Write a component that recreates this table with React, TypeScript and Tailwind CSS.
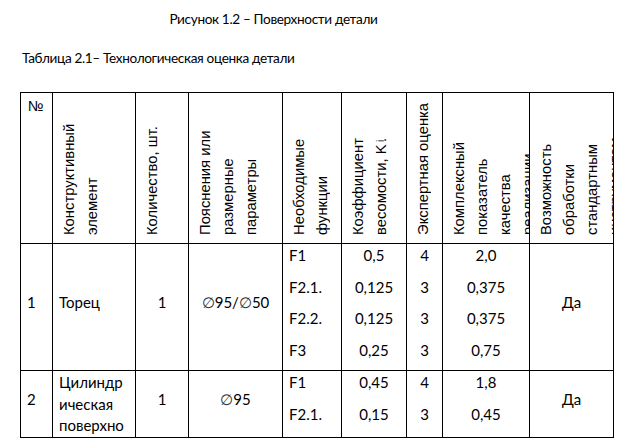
import React from "react";

const bodyFont = "font-[family-name:Lato,'Open_Sans',sans-serif]";
const headFont = "font-[family-name:'Liberation_Sans',Arial,sans-serif]";

const VHead = ({ lines }: { lines: React.ReactNode[] }) => {
    return (
        <div className="overflow-hidden bg-white">
            <div
                className={`${headFont} h-full w-full rotate-180 whitespace-nowrap pt-[8px] pr-[5px] text-[14.8px] leading-[23px] [writing-mode:vertical-rl]`}
            >
                {lines.map((line, i) => (
                    <div key={i}>{line}</div>
                ))}
            </div>
        </div>
    );
};

const Diam = () => (
    <span className="font-[family-name:'DejaVu_Sans',sans-serif] font-extralight text-[#333]">
        ∅
    </span>
);

// vertically centred cell (one line, with "space after" below it)
const Mid = ({
    children,
    center,
}: {
    children: React.ReactNode;
    center?: boolean;
}) => (
    <div
        className={`flex items-center overflow-hidden bg-white pb-[10px] leading-[20px] ${
            center ? "justify-center" : "pl-[6px]"
        }`}
    >
        <div>{children}</div>
    </div>
);

const Stack = ({
    items,
    center,
}: {
    items: string[];
    center?: boolean;
}) => (
    <div
        className={`overflow-hidden bg-white pt-[1px] leading-[20px] ${
            center ? "text-center" : "pl-[6px]"
        }`}
    >
        {items.map((it, i) => (
            <div key={i} className="h-[31.5px]">
                {it}
            </div>
        ))}
    </div>
);

export default function App() {
    return (
        <div className={`${bodyFont} h-[448px] w-[628px] bg-white text-[15px] text-black`}>
            <div className="ml-[22px] w-[503px] pt-[9px] text-center text-[13.6px] leading-[20px] tracking-[-0.35px]">
                Рисунок 1.2 – Поверхности детали
            </div>
            <div className="ml-[22px] mt-[19px] text-[13.6px] leading-[20px] tracking-[-0.35px]">
                Таблица 2.1– Технологическая оценка детали
            </div>

            <div className="ml-[20px] mt-[24px] grid w-[594px] grid-cols-[31px_82px_52px_93px_58px_64px_35px_86px_83px] grid-rows-[150px_126px_66px] gap-px bg-black p-px">
                {/* header */}
                <div className={`${headFont} bg-white pl-[7px] pt-[3px] text-[14.67px] leading-[20px]`}>
                    №
                </div>
                <VHead lines={["Конструктивный", "элемент"]} />
                <VHead lines={["Количество, шт."]} />
                <VHead lines={["Пояснения или", "размерные", "параметры"]} />
                <VHead lines={["Необходимые", "функции"]} />
                <VHead
                    lines={[
                        "Коэффициент",
                        <span key="k">
                            весомости, K<sub className="text-[10px]">i</sub>.
                        </span>,
                    ]}
                />
                <VHead lines={["Экспертная оценка"]} />
                <VHead lines={["Комплексный", "показатель", "качества", "реализации"]} />
                <VHead lines={["Возможность", "обработки", "стандартным", "инструментом"]} />

                {/* row 1 */}
                <Mid>1</Mid>
                <Mid>Торец</Mid>
                <Mid center>1</Mid>
                <Mid center>
                    <Diam />
                    95/
                    <Diam />
                    50
                </Mid>
                <Stack items={["F1", "F2.1.", "F2.2.", "F3"]} />
                <Stack center items={["0,5", "0,125", "0,125", "0,25"]} />
                <Stack center items={["4", "3", "3", "3"]} />
                <Stack center items={["2,0", "0,375", "0,375", "0,75"]} />
                <Mid center>Да</Mid>

                {/* row 2 */}
                <Mid>2</Mid>
                <div className="overflow-hidden bg-white pl-[6px] pt-[1px] leading-[21.5px]">
                    <div>Цилиндр</div>
                    <div>ическая</div>
                    <div>поверхно</div>
                </div>
                <Mid center>1</Mid>
                <Mid center>
                    <Diam />
                    95
                </Mid>
                <Stack items={["F1", "F2.1."]} />
                <Stack center items={["0,45", "0,15"]} />
                <Stack center items={["4", "3"]} />
                <Stack center items={["1,8", "0,45"]} />
                <Mid center>Да</Mid>
            </div>
        </div>
    );
}
